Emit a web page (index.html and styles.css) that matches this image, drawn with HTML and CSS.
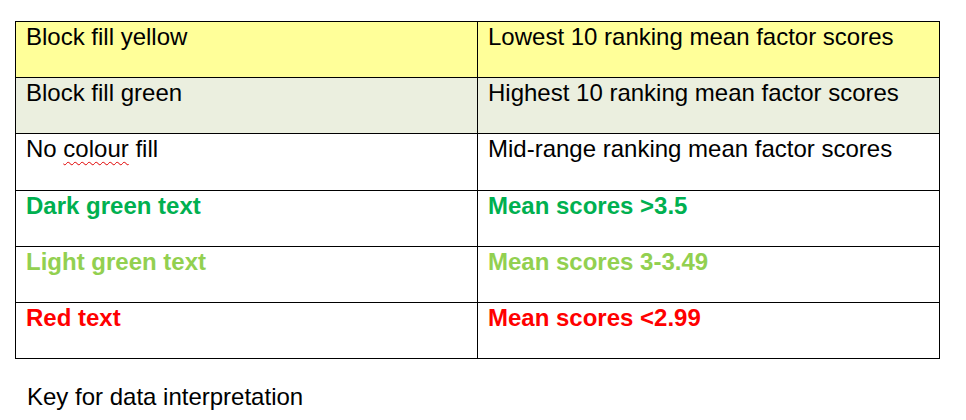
FILE: index.html
```html
<!DOCTYPE html>
<html>
<head>
<meta charset="utf-8">
<link rel="stylesheet" href="styles.css">
</head>
<body>
<table class="key">
  <tr class="yellow"><td class="c1">Block fill yellow</td><td class="c2">Lowest 10 ranking mean factor scores</td></tr>
  <tr class="green"><td class="c1">Block fill green</td><td class="c2">Highest 10 ranking mean factor scores</td></tr>
  <tr><td class="c1">No <span class="spell">colour</span> fill</td><td class="c2">Mid-range ranking mean factor scores</td></tr>
  <tr class="dark"><td class="c1">Dark green text</td><td class="c2">Mean scores &gt;3.5</td></tr>
  <tr class="light"><td class="c1">Light green text</td><td class="c2">Mean scores 3-3.49</td></tr>
  <tr class="red"><td class="c1">Red text</td><td class="c2">Mean scores &lt;2.99</td></tr>
</table>
<p class="caption">Key for data interpretation</p>
</body>
</html>
```
FILE: styles.css
```css
html, body { margin: 0; padding: 0; background: #fff; }
body { font-family: "Liberation Sans", Arial, sans-serif; font-size: 24px; color: #000; padding: 21px 0 0 15px; }
.key { border-collapse: collapse; width: 925px; }
.key td { border: 1.5px solid #000; height: 56.2px; padding: 1px 10px 0 10px; vertical-align: top; box-sizing: border-box; line-height: 27px; }
.c1 { width: 462px; }
.yellow td { background: #FFFF99; }
.green td { background: #EBEFDF; }
.dark td { color: #00B050; font-weight: bold; }
.light td { color: #92D050; font-weight: bold; }
.red td { color: #FF0000; font-weight: bold; }
.spell { text-decoration: underline wavy #e00000; text-decoration-thickness: 1px; text-underline-offset: 4px; }
.caption { margin: 24px 0 0 12px; line-height: 27px; }
```
